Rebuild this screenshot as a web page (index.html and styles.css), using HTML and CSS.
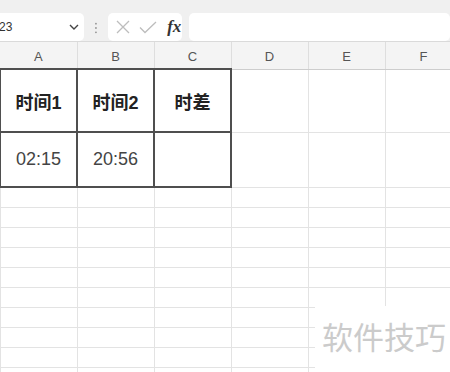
FILE: index.html
```html
<!DOCTYPE html>
<html lang="zh-CN">
<head>
<meta charset="UTF-8">
<meta name="viewport" content="width=device-width, initial-scale=1.0">
<title>时差</title>
<link rel="stylesheet" href="styles.css">
</head>
<body>

<div class="toolbar">
    <div class="name-box">
        <span>23</span>
        <svg class="chevron" width="10" height="6" viewBox="0 0 10 6"><path d="M1 1l4 4 4-4" fill="none" stroke="#444" stroke-width="1.4"/></svg>
    </div>
    <svg class="grip" width="4" height="12" viewBox="0 0 4 12"><circle cx="2" cy="1.5" r="1" fill="#999"/><circle cx="2" cy="6" r="1" fill="#999"/><circle cx="2" cy="10.5" r="1" fill="#999"/></svg>
    <div class="fx-box">
        <svg width="14" height="14" viewBox="0 0 14 14"><path d="M1 1l12 12M13 1L1 13" stroke="#bdbdbd" stroke-width="1.3"/></svg>
        <svg width="18" height="13" viewBox="0 0 18 13"><path d="M1 6.5l5 5L17 1" fill="none" stroke="#bdbdbd" stroke-width="1.3"/></svg>
        <span class="fx">fx</span>
    </div>
    <div class="formula-box"></div>
</div>

<table class="sheet">
    <colgroup>
        <col class="c"><col class="c"><col class="c"><col class="c"><col class="c"><col class="c">
    </colgroup>
    <tr class="col-head">
        <th>A</th><th>B</th><th>C</th><th>D</th><th>E</th><th>F</th>
    </tr>
    <tr class="r-title">
        <td class="bold title">时间1</td><td class="bold title">时间2</td><td class="bold title">时差</td><td></td><td></td><td></td>
    </tr>
    <tr class="r-value">
        <td class="bold value">02:15</td><td class="bold value">20:56</td><td class="bold"></td><td></td><td></td><td></td>
    </tr>
    <tr class="r"><td></td><td></td><td></td><td></td><td></td><td></td></tr>
    <tr class="r"><td></td><td></td><td></td><td></td><td></td><td></td></tr>
    <tr class="r"><td></td><td></td><td></td><td></td><td></td><td></td></tr>
    <tr class="r"><td></td><td></td><td></td><td></td><td></td><td></td></tr>
    <tr class="r"><td></td><td></td><td></td><td></td><td></td><td></td></tr>
    <tr class="r"><td></td><td></td><td></td><td></td><td></td><td></td></tr>
    <tr class="r"><td></td><td></td><td></td><td></td><td></td><td></td></tr>
    <tr class="r"><td></td><td></td><td></td><td></td><td></td><td></td></tr>
    <tr class="r"><td></td><td></td><td></td><td></td><td></td><td></td></tr>
    <tr class="r"><td></td><td></td><td></td><td></td><td></td><td></td></tr>
</table>

<div class="watermark">软件技巧</div>

</body>
</html>
```

FILE: styles.css
```css
html, body {
    margin: 0;
    padding: 0;
    width: 450px;
    height: 372px;
    overflow: hidden;
    background-color: #fff;
    font-family: "Liberation Sans", "Noto Sans CJK SC", sans-serif;
}

.toolbar {
    display: flex;
    align-items: flex-start;
    height: 42px;
    padding-top: 13px;
    box-sizing: border-box;
    background-color: #f0f0f0;
    border-bottom: 1px solid #dadada;
}
.name-box {
    display: flex;
    align-items: center;
    justify-content: space-between;
    width: 97px;
    height: 28px;
    margin-left: -10px;
    padding: 0 5px 0 9px;
    box-sizing: border-box;
    background-color: #fff;
    border-radius: 5px;
    font-size: 12px;
    color: #333;
}
.grip {
    margin: 9px 0 0 10px;
}
.fx-box {
    display: flex;
    align-items: center;
    width: 76px;
    height: 28px;
    margin-left: 10px;
    padding-left: 8px;
    box-sizing: border-box;
    background-color: #fff;
    border-radius: 5px;
}
.fx-box svg {
    margin-right: 9px;
}
.fx {
    font-family: "Liberation Serif", serif;
    font-style: italic;
    font-weight: bold;
    font-size: 17px;
    color: #333;
    margin-left: 1px;
}
.formula-box {
    width: 270px;
    height: 28px;
    margin-left: 7px;
    background-color: #fff;
    border-radius: 5px;
}

.sheet {
    border-collapse: collapse;
    table-layout: fixed;
    width: 462px;
    margin-left: -1px;
}
.c {
    width: 77px;
}
.sheet td {
    border: 1px solid #e3e3e3;
    padding: 0;
    text-align: center;
}
.col-head th {
    height: 24px;
    padding: 0;
    padding-top: 2px;
    background-color: #f4f4f4;
    border-right: 1px solid #dedede;
    border-bottom: 1px solid #cdcdcd;
    font-weight: normal;
    font-size: 13px;
    color: #555;
}
.r-title td {
    height: 61px;
}
.r-value td {
    height: 53px;
}
.r td {
    height: 19px;
}
.sheet td.bold {
    border: 2px solid #4f4f4f;
}
.title {
    font-size: 18px;
    font-weight: bold;
    color: #222;
    padding-top: 4px;
}
.value {
    font-size: 18px;
    color: #444;
    padding-top: 4px;
}

.watermark {
    position: absolute;
    right: 0;
    bottom: 0;
    width: 135px;
    height: 66px;
    padding: 12px 0 0 7px;
    box-sizing: border-box;
    background-color: #fff;
    font-family: "Noto Sans CJK SC", sans-serif;
    font-size: 31px;
    line-height: 36px;
    color: #cbcbcb;
}
```
